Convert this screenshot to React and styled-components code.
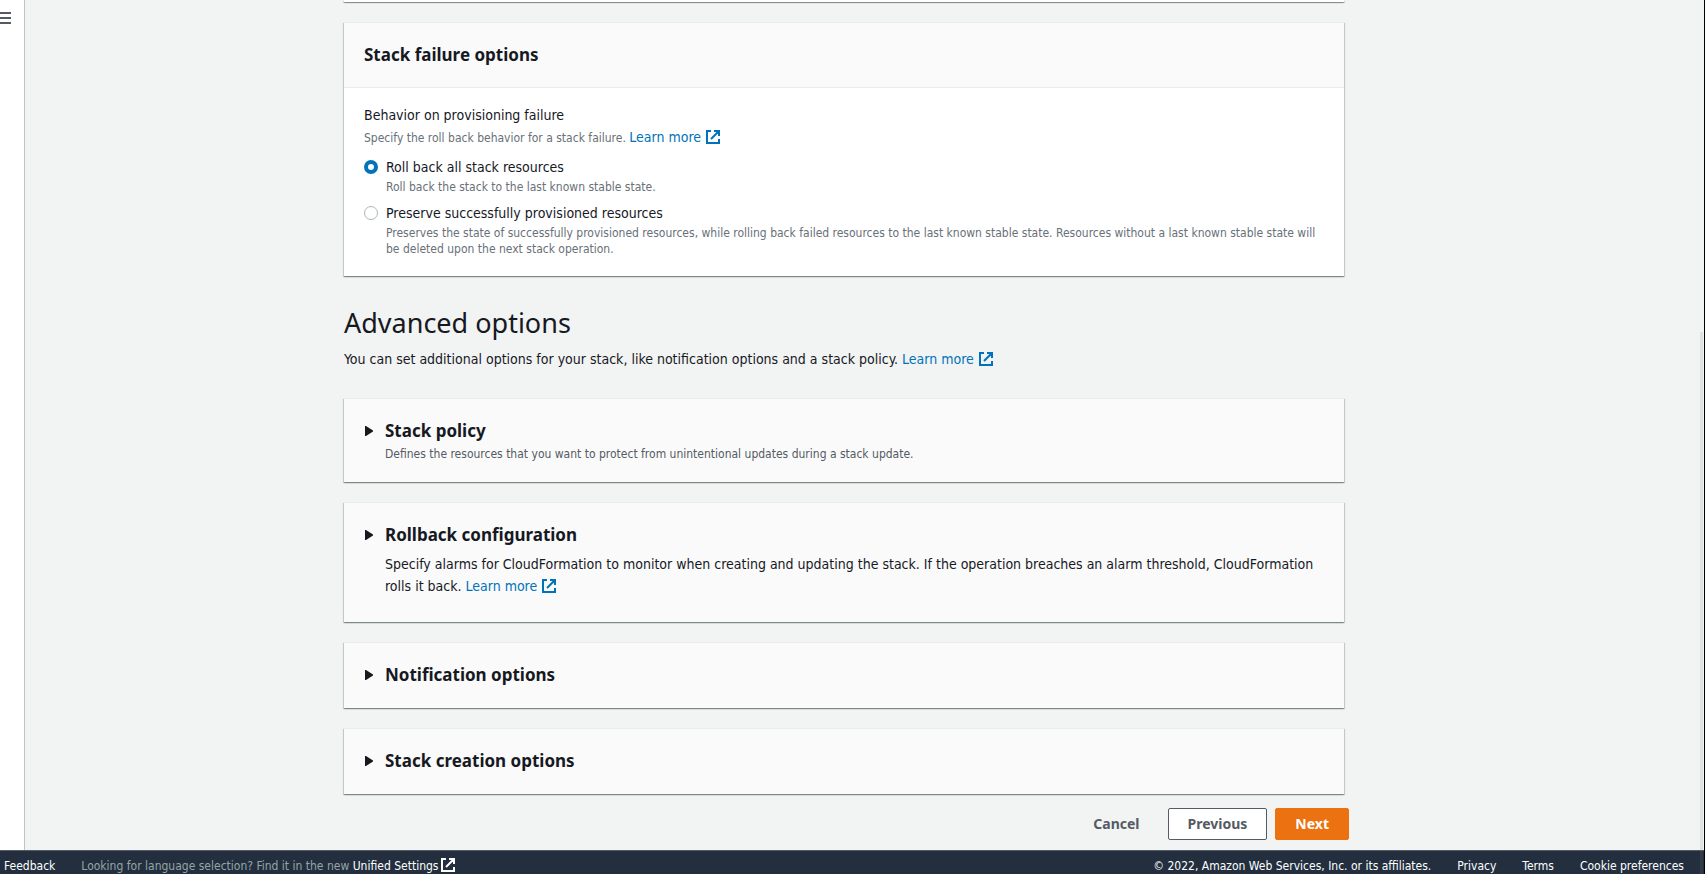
import React, { useState } from "react";
import styled, { createGlobalStyle } from "styled-components";

const headingFont = `"Noto Sans", "Open Sans", sans-serif`;

const Global = createGlobalStyle`
  *, *::before, *::after { box-sizing: border-box; }
  body {
    margin: 0;
    background: #f2f3f3;
    color: #16191f;
    font-family: "DejaVu Sans Condensed", "Noto Sans", sans-serif;
    font-size: 14px;
    line-height: 22px;
  }
  h1, h2, p { margin: 0; }
  button, input { font: inherit; }
`;

const Page = styled.div`
  position: relative;
  display: flex;
  flex-direction: column;
  height: 100vh;
  overflow: hidden;
  border-right: 1px solid #000;
`;

const Body = styled.div`
  display: flex;
  flex: 1;
  min-height: 0;
`;

const Sidebar = styled.nav`
  flex: none;
  width: 25px;
  padding-top: 12px;
  background: #fff;
  border-right: 1px solid #bfc5c6;
`;

const MenuButton = styled.button`
  display: block;
  width: 11px;
  height: 12px;
  padding: 0;
  border: 0;
  background: none;
  color: #545b64;
  cursor: pointer;

  svg { display: block; }
`;

const Main = styled.main`
  flex: 1;
  min-width: 0;
  overflow: hidden;
  padding: 0 41px 10px 0;
`;

const Content = styled.div`
  display: flex;
  flex-direction: column;
  gap: 20px;
  max-width: 1000px;
  margin: 0 auto;
`;

const Card = styled.section`
  background: ${(p) => (p.$muted ? "#fafafa" : "#fff")};
  border-top: 1px solid #eaeded;
  box-shadow: 0 1px 1px 0 rgba(0, 28, 36, 0.3),
    1px 1px 1px 0 rgba(0, 28, 36, 0.15),
    -1px 1px 1px 0 rgba(0, 28, 36, 0.15);
`;

const CardTail = styled(Card)`
  height: 2px;
  border-top: 0;
`;

const CardHeader = styled.header`
  padding: 21px 20px;
  background: #fafafa;
  border-bottom: 1px solid #eaeded;
`;

const Heading = styled.h2`
  font-family: ${headingFont};
  font-size: 17px;
  line-height: 22px;
  font-weight: 700;
`;

const Fieldset = styled.fieldset`
  margin: 0;
  min-width: 0;
  border: 0;
  padding: 16px 20px 19px;
`;

const Legend = styled.legend`
  float: left;
  width: 100%;
  padding: 0;
`;

const Hint = styled.p`
  clear: both;
  font-size: 12px;
  color: #687078;
`;

const Link = styled.a`
  font-size: 14px;
  color: #0073bb;
  text-decoration: none;
  white-space: nowrap;

  svg {
    margin-left: 5px;
    vertical-align: -2px;
  }
  &:hover { text-decoration: underline; }
`;

const Options = styled.div`
  display: grid;
  gap: 7px;
  margin-top: 7px;
`;

const Option = styled.label`
  display: grid;
  grid-template-columns: 14px 1fr;
  column-gap: 8px;
  cursor: pointer;
`;

const Radio = styled.input`
  appearance: none;
  width: 14px;
  height: 14px;
  margin: 4px 0 0;
  border: 1px solid #aab7b8;
  border-radius: 50%;
  background: #fff;

  &:checked { border: 4px solid #0073bb; }
`;

const OptionHint = styled.span`
  display: block;
  margin-top: 1px;
  font-size: 12px;
  line-height: 16px;
  color: #687078;
`;

const Intro = styled.div`
  padding: 7px 0 8px;
`;

const Title = styled.h1`
  font-family: ${headingFont};
  font-size: 27px;
  line-height: 40px;
  font-weight: 400;
`;

const Lead = styled.p`
  margin-top: 5px;
`;

const Expander = styled.div`
  min-height: 65px;
  padding: 21px 16px 20px 41px;
`;

const Toggle = styled.button`
  display: flex;
  align-items: center;
  gap: 10px;
  margin-left: -20px;
  padding: 0;
  border: 0;
  background: none;
  color: inherit;
  font-weight: 700;
  cursor: pointer;

  svg { flex: none; transform: ${(p) => (p["aria-expanded"] ? "rotate(90deg)" : "none")}; }
`;

const Note = styled.p`
  margin-top: 4px;
  font-size: 12px;
  line-height: 16px;
  color: #545b64;
`;

const Description = styled.p`
  margin: 7px 0 5px;
`;

const Actions = styled.div`
  display: flex;
  justify-content: flex-end;
  gap: 8px;
  margin: -6px -5px 0 0;
`;

const Button = styled.button`
  height: 32px;
  padding: 0 19px;
  border: 1px solid ${(p) => (p.$kind === "primary" ? "#ec7211" : p.$kind === "normal" ? "#545b64" : "transparent")};
  border-radius: 2px;
  background: ${(p) => (p.$kind === "primary" ? "#ec7211" : p.$kind === "normal" ? "#fff" : "transparent")};
  color: ${(p) => (p.$kind === "primary" ? "#fff" : "#545b64")};
  font-family: ${headingFont};
  font-weight: 700;
  cursor: pointer;
`;

const Footer = styled.footer`
  display: flex;
  justify-content: space-between;
  flex: none;
  padding: 7px 20px 0 4px;
  border-top: 1px solid #545b64;
  background: #232f3e;
  color: #fff;
  font-size: 12px;
  line-height: 16px;
`;

const FooterGroup = styled.div`
  display: flex;
  gap: 26px;
  color: ${(p) => (p.$dim ? "#95a5a6" : "#fff")};
  white-space: nowrap;
`;

const FooterLink = styled.a`
  color: #fff;
  text-decoration: none;

  svg { margin-left: 3px; vertical-align: -2px; }
`;

const ScrollThumb = styled.div`
  position: absolute;
  top: 38%;
  right: 1px;
  bottom: 0;
  width: 3px;
  background: rgba(128, 128, 128, 0.16);
`;

const ExternalIcon = () => (
  <svg width="14" height="14" viewBox="0 0 14 14" fill="none" stroke="currentColor" strokeWidth="2" aria-hidden="true">
    <path d="M5 1H1v12h12V9M8 1h5v5M13 1 5 9" />
  </svg>
);

const Caret = () => (
  <svg width="10" height="10" viewBox="0 0 10 10" fill="currentColor" aria-hidden="true">
    <path d="M0 0h1l7 4.5v1L1 10H0z" />
  </svg>
);

const LearnMore = () => (
  <Link href="#learn-more">
    Learn more
    <ExternalIcon />
  </Link>
);

function ExpandableCard({ title, children }) {
  const [open, setOpen] = useState(false);
  return (
    <Card $muted>
      <Expander>
        <Heading>
          <Toggle type="button" aria-expanded={open} onClick={() => setOpen(!open)}>
            <Caret />
            {title}
          </Toggle>
        </Heading>
        {children}
      </Expander>
    </Card>
  );
}

const behaviors = [
  {
    id: "rollback",
    label: "Roll back all stack resources",
    hint: "Roll back the stack to the last known stable state.",
  },
  {
    id: "preserve",
    label: "Preserve successfully provisioned resources",
    hint: "Preserves the state of successfully provisioned resources, while rolling back failed resources to the last known stable state. Resources without a last known stable state will be deleted upon the next stack operation.",
  },
];

export default function App() {
  const [behavior, setBehavior] = useState("rollback");
  return (
    <>
      <Global />
      <Page>
        <Body>
          <Sidebar>
            <MenuButton type="button" aria-label="Open navigation">
              <svg width="11" height="12" viewBox="0 0 11 12" fill="currentColor" aria-hidden="true">
                <path d="M0 0h11v2H0zM0 5h11v2H0zM0 10h11v2H0z" />
              </svg>
            </MenuButton>
          </Sidebar>
          <Main>
            <Content>
              <CardTail as="div" />
              <Card>
                <CardHeader>
                  <Heading>Stack failure options</Heading>
                </CardHeader>
                <Fieldset>
                  <Legend>Behavior on provisioning failure</Legend>
                  <Hint>
                    Specify the roll back behavior for a stack failure. <LearnMore />
                  </Hint>
                  <Options>
                    {behaviors.map((b) => (
                      <Option key={b.id}>
                        <Radio
                          type="radio"
                          name="behavior"
                          checked={behavior === b.id}
                          onChange={() => setBehavior(b.id)}
                        />
                        <span>
                          {b.label}
                          <OptionHint>{b.hint}</OptionHint>
                        </span>
                      </Option>
                    ))}
                  </Options>
                </Fieldset>
              </Card>
              <Intro>
                <Title>Advanced options</Title>
                <Lead>
                  You can set additional options for your stack, like notification options and a stack policy.{" "}
                  <LearnMore />
                </Lead>
              </Intro>
              <ExpandableCard title="Stack policy">
                <Note>Defines the resources that you want to protect from unintentional updates during a stack update.</Note>
              </ExpandableCard>
              <ExpandableCard title="Rollback configuration">
                <Description>
                  Specify alarms for CloudFormation to monitor when creating and updating the stack. If the operation
                  breaches an alarm threshold, CloudFormation rolls it back. <LearnMore />
                </Description>
              </ExpandableCard>
              <ExpandableCard title="Notification options" />
              <ExpandableCard title="Stack creation options" />
              <Actions>
                <Button type="button">Cancel</Button>
                <Button type="button" $kind="normal">Previous</Button>
                <Button type="button" $kind="primary">Next</Button>
              </Actions>
            </Content>
          </Main>
        </Body>
        <Footer>
          <FooterGroup $dim>
            <FooterLink href="#feedback">Feedback</FooterLink>
            <span>
              Looking for language selection? Find it in the new{" "}
              <FooterLink href="#settings">
                Unified Settings
                <ExternalIcon />
              </FooterLink>
            </span>
          </FooterGroup>
          <FooterGroup>
            <span>© 2022, Amazon Web Services, Inc. or its affiliates.</span>
            <FooterLink href="#privacy">Privacy</FooterLink>
            <FooterLink href="#terms">Terms</FooterLink>
            <FooterLink href="#cookies">Cookie preferences</FooterLink>
          </FooterGroup>
        </Footer>
        <ScrollThumb />
      </Page>
    </>
  );
}
